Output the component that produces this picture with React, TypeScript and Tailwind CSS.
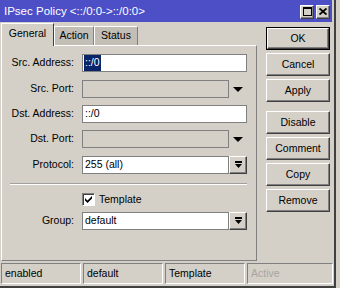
import React from "react";

const raised =
  "border border-t-white border-l-white border-r-[#404040] border-b-[#404040] shadow-[inset_-1px_-1px_0_#808080]";

function ComboIcon() {
  return (
    <svg width="7" height="8" viewBox="0 0 7 8">
      <rect x="0" y="0" width="7" height="2" fill="#000" />
      <path d="M0 3H7L3.5 7Z" fill="#000" />
    </svg>
  );
}

function Row({
  label,
  children,
  className = "",
}: {
  label: string;
  children: React.ReactNode;
  className?: string;
}) {
  return (
    <div className={"flex h-[18px] items-center " + className}>
      <span className="w-[72px] text-right">{label}</span>
      <div className="ml-[8px] flex h-full">{children}</div>
    </div>
  );
}

function PortField() {
  return (
    <>
      <div className="h-[18px] w-[147px] border border-[#808080] bg-[#d4d0c8]" />
      <div className="flex w-[18px] items-center justify-center">
        <svg width="10" height="5" viewBox="0 0 10 5">
          <path d="M0 0H10L5 5Z" fill="#000" />
        </svg>
      </div>
    </>
  );
}

function ComboField({ value }: { value: string }) {
  return (
    <>
      <div className="flex h-[18px] w-[147px] items-center border border-[#808080] bg-white pl-[2px]">
        {value}
      </div>
      <div className={"flex h-[18px] w-[18px] items-center justify-center bg-[#d4d0c8] " + raised}>
        <ComboIcon />
      </div>
    </>
  );
}

const buttons = ["OK", "Cancel", "Apply", "Disable", "Comment", "Copy", "Remove"];

export default function App() {
  return (
    <div className="h-[288px] w-[340px] overflow-hidden bg-[#d4d0c8] font-['Liberation_Sans',Arial,sans-serif] text-[10.5px] text-black">
      <div className="flex h-[288px] w-[336px] flex-col border-b-2 border-r-2 border-[#404040]">
        {/* title bar */}
        <div className="flex h-[22px] w-[332px] shrink-0 items-center bg-[#4c4fc6] pl-[4px] pt-[1px]">
          <span className="text-[11.5px] text-white">IPsec Policy &lt;::/0:0-&gt;::/0:0&gt;</span>
          <div className="ml-auto mr-[2px] flex gap-[2px]">
            <div className={"flex h-[14px] w-[14px] items-center justify-center bg-[#d4d0c8] " + raised}>
              <svg width="9" height="9" viewBox="0 0 9 9">
                <path d="M0 0H9V9H0Z M1 2V8H8V2Z" fill="#000" fillRule="evenodd" />
              </svg>
            </div>
            <div className={"flex h-[14px] w-[14px] items-center justify-center bg-[#d4d0c8] " + raised}>
              <svg width="8" height="7" viewBox="0 0 8 7">
                <path d="M0.5 0.5L7.5 6.5M7.5 0.5L0.5 6.5" stroke="#000" strokeWidth="1.8" />
              </svg>
            </div>
          </div>
        </div>

        {/* body */}
        <div className="flex h-[239px] shrink-0 pl-[1px]">
          <div className="flex w-[256px] flex-col pt-[1px]">
            <div className="flex h-[22px] items-end">
              <div className="relative z-10 -mb-px flex h-[23px] w-[53px] items-center justify-center border-l border-r border-t border-l-white border-r-[#404040] border-t-white bg-[#d4d0c8] pb-[2px]">
                General
              </div>
              <div className="flex h-[19px] w-[40px] items-center justify-center border-l border-r border-t border-l-white border-r-[#808080] border-t-white bg-[#c2beb6]">
                Action
              </div>
              <div className="flex h-[19px] w-[44px] items-center justify-center border-l border-r border-t border-l-white border-r-[#808080] border-t-white bg-[#c2beb6]">
                Status
              </div>
            </div>
            <div className="flex h-[216px] flex-col border border-b-[#808080] border-l-white border-r-[#808080] border-t-white">
              <Row label="Src. Address:" className="mt-[8px]">
                <div className="flex h-[18px] w-[165px] items-center border border-[#808080] bg-white pl-[1px]">
                  <span className="bg-[#0a246a] px-[1px] text-white">::/0</span>
                </div>
              </Row>
              <Row label="Src. Port:" className="mt-[8px]">
                <PortField />
              </Row>
              <Row label="Dst. Address:" className="mt-[7px]">
                <div className="flex h-[18px] w-[165px] items-center border border-[#808080] bg-white pl-[2px]">
                  ::/0
                </div>
              </Row>
              <Row label="Dst. Port:" className="mt-[7px]">
                <PortField />
              </Row>
              <Row label="Protocol:" className="mt-[8px]">
                <ComboField value="255 (all)" />
              </Row>
              <div className="ml-[8px] mt-[9px] h-[2px] w-[237px] border-b border-t border-b-white border-t-[#a0a0a0]" />
              <div className="ml-[80px] mt-[8px] flex h-[13px] items-center">
                <div className="flex h-[13px] w-[13px] items-center justify-center border border-b-white border-l-[#808080] border-r-white border-t-[#808080] bg-white shadow-[inset_1px_1px_0_#404040]">
                  <svg width="7" height="7" viewBox="0 0 7 7">
                    <path d="M0 2L2.5 4.5L7 0V2.5L2.5 7L0 4.5Z" fill="#000" />
                  </svg>
                </div>
                <span className="ml-[4px]">Template</span>
              </div>
              <Row label="Group:" className="mt-[6px]">
                <ComboField value="default" />
              </Row>
            </div>
          </div>

          <div className="ml-[9px] flex w-[64px] flex-col pt-[5px]">
            {buttons.map((b, i) => (
              <div
                key={b}
                className={
                  "flex h-[23px] items-center justify-center bg-[#d4d0c8] " +
                  (i === 0 ? "border border-black" : "") +
                  (i === 0 ? "" : i === 3 ? " mt-[9px]" : " mt-[3px]")
                }
              >
                {i === 0 ? (
                  <div className={"flex h-full w-full items-center justify-center " + raised}>{b}</div>
                ) : (
                  <div className={"flex h-full w-full items-center justify-center " + raised}>{b}</div>
                )}
              </div>
            ))}
          </div>
        </div>

        {/* status bar */}
        <div className="mt-[2px] flex h-[21px] shrink-0 gap-[2px] pl-[1px]">
          {["enabled", "default", "Template", "Active"].map((s, i) => (
            <div
              key={s}
              className={
                "flex items-center border border-b-white border-l-[#808080] border-r-white border-t-[#808080] pl-[3px] " +
                (i === 3 ? "w-[86px] text-[#a8a4a0]" : "w-[80px]")
              }
            >
              {s}
            </div>
          ))}
        </div>
      </div>
    </div>
  );
}
